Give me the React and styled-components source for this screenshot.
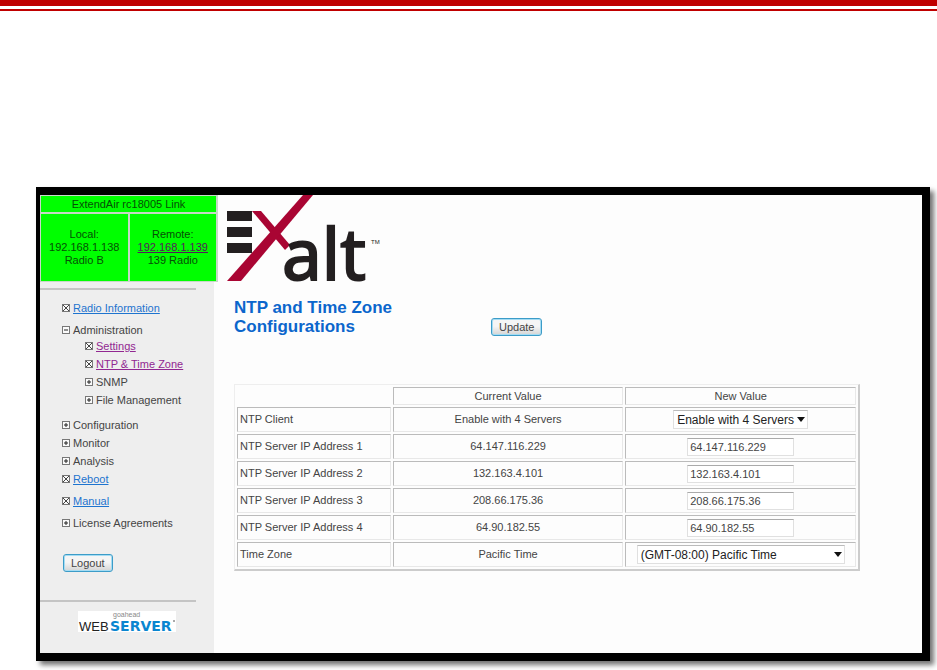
import { useState } from "react";
import styled, { createGlobalStyle } from "styled-components";

const GlobalStyle = createGlobalStyle`
  * {
    box-sizing: border-box;
  }

  body {
    margin: 0;
    background-color: white;
    color: #444;
    font-family: "Liberation Sans", Arial, sans-serif;
    font-size: 11px;
    line-height: 13px;
  }
`;

const Page = styled.div``;

const TopBar = styled.div`
  height: 11px;
  border-top: 6px solid #c00000;
  border-bottom: 2px solid #c00000;
`;

const Frame = styled.div`
  display: flex;
  margin: 176px 7px 9px 36px;
  border: 8px solid black;
  border-left-width: 4px;
  box-shadow: 4px 4px 5px rgba(0, 0, 0, 0.55);
  background-color: #fdfdfd;
`;

const Sidebar = styled.aside`
  flex: 0 0 174px;
  min-width: 0;
  padding-bottom: 20px;
  background-color: #eee;
`;

const Status = styled.section`
  display: grid;
  grid-template-columns: 1fr 1fr;
  gap: 2px;
  width: 178px;
  margin-bottom: 6px;
  padding: 1px 2px 1px 1px;
  background-color: #c8d8c8;
  color: #064f06;
  text-align: center;
`;

const StatusTitle = styled.div`
  grid-column: 1 / 3;
  padding: 2px 0 1px;
  background-color: #00ff00;
`;

const StatusCell = styled.div`
  padding: 14px 0;
  background-color: #00ff00;
`;

const RemoteLink = styled.a`
  color: #551a5b;
`;

const Rule = styled.hr`
  width: 156px;
  height: 2px;
  margin: 0;
  border: none;
  background-color: #c4c4c4;
`;

const Nav = styled.nav`
  padding: 9px 0 0 22px;
`;

const MenuItem = styled.div`
  display: flex;
  align-items: center;
  gap: 3px;
  height: 18px;
  margin-top: ${(props) => (props.$spaced ? "4px" : "0")};
`;

const SubMenu = styled.div`
  margin-top: -2px;
  padding: 0 0 7px 23px;
`;

const MenuLink = styled.a`
  color: ${(props) => (props.$visited ? "#912791" : "#1e74cf")};
`;

const Box = styled.svg`
  width: 8px;
  height: 8px;
  flex: none;
`;

const Button = styled.button`
  height: 18px;
  padding: 0 7px;
  border: 1px solid #3c9cc8;
  border-radius: 3px;
  box-shadow: inset 0 0 0 1px #a5dcf3;
  background: linear-gradient(#f5f5f5 45%, #d4d4d4);
  color: #444;
  font-family: inherit;
  font-size: 11px;
  line-height: 14px;
`;

const LogoutRow = styled.div`
  padding: 22px 0 28px 23px;
`;

const ServerLogo = styled.svg`
  display: block;
  width: 98px;
  height: 21px;
  margin: 9px 0 0 38px;
  overflow: visible;
`;

const Main = styled.main`
  flex: 1;
  min-width: 0;
`;

const ExaltLogo = styled.svg`
  display: block;
  width: 180px;
  height: 95px;
  margin-left: 6px;
  overflow: visible;
`;

const Content = styled.div`
  padding: 8px 62px 82px 20px;
`;

const TitleRow = styled.div`
  display: flex;
  align-items: flex-end;
  margin-bottom: 48px;
`;

const Title = styled.h1`
  flex: 0 0 257px;
  margin: 0;
  padding-right: 80px;
  color: #0b66cc;
  font-size: 17px;
  font-weight: 700;
  line-height: 19px;
`;

const Table = styled.table`
  width: 100%;
  border: 1px solid #eee;
  border-right: 2px solid #ccc;
  border-bottom: 2px solid #ccc;
  border-spacing: 2px;
  table-layout: fixed;
`;

const Head = styled.th`
  height: 18px;
  padding: 0;
  border: 1px solid #e8e8e8;
  border-top-color: #bbb;
  border-left-color: #bbb;
  font-weight: 400;
`;

const EmptyHead = styled.td`
  width: 25%;
  padding: 0;
`;

const Label = styled.th`
  height: 25px;
  padding: 0 2px;
  border: 1px solid #e8e8e8;
  border-top-color: #bbb;
  border-left-color: #bbb;
  font-weight: 400;
  text-align: left;
`;

const Cell = styled.td`
  height: 25px;
  padding: 0;
  border: 1px solid #e8e8e8;
  border-top-color: #bbb;
  border-left-color: #bbb;
  text-align: center;
`;

const Input = styled.input`
  display: block;
  width: 107px;
  height: 18px;
  margin: 0 auto;
  padding: 0 2px;
  border: 1px solid #e0e0e0;
  border-top-color: #aaa;
  background-color: white;
  color: #444;
  font-family: inherit;
  font-size: 11px;
`;

const SelectWrap = styled.div`
  position: relative;
  width: ${(props) => props.$width};
  margin: 0 auto;
`;

const Select = styled.select`
  display: block;
  width: 100%;
  height: 19px;
  padding: 0 3px;
  border: 1px solid #e0e0e0;
  border-top-color: #bbb;
  appearance: none;
  background-color: white;
  color: #222;
  font-family: inherit;
  font-size: 12px;
`;

const Arrow = styled.svg`
  position: absolute;
  top: 7px;
  right: 3px;
  width: 8px;
  height: 5px;
  pointer-events: none;
`;

const MENU_TOP = [{ text: "Radio Information", type: "link" }];

const MENU_ADMIN = [
  { text: "Settings", type: "link", visited: true },
  { text: "NTP & Time Zone", type: "link", visited: true },
  { text: "SNMP", type: "plus" },
  { text: "File Management", type: "plus" },
];

const MENU_BOTTOM = [
  { text: "Configuration", type: "plus" },
  { text: "Monitor", type: "plus" },
  { text: "Analysis", type: "plus" },
  { text: "Reboot", type: "link" },
  { text: "Manual", type: "link", spaced: true },
  { text: "License Agreements", type: "plus", spaced: true },
];

const SERVERS = ["64.147.116.229", "132.163.4.101", "208.66.175.36", "64.90.182.55"];

const MenuBox = ({ type }) => (
  <Box viewBox="0 0 8 8" aria-hidden="true">
    <rect x="0.5" y="0.5" width="7" height="7" fill="#fafafa" stroke="#777" />
    {type === "link" && <path d="M1 1L7 7M7 1L1 7" stroke="#444" />}
    {type !== "link" && <path d="M2 4H6" stroke="#222" />}
    {type === "plus" && <path d="M4 2V6" stroke="#222" />}
  </Box>
);

const Item = ({ item }) => (
  <MenuItem $spaced={item.spaced}>
    <MenuBox type={item.type} />
    {item.type === "link" ? (
      <MenuLink href="#" $visited={item.visited}>
        {item.text}
      </MenuLink>
    ) : (
      <span>{item.text}</span>
    )}
  </MenuItem>
);

const DropDown = ({ id, value, width }) => (
  <SelectWrap $width={width}>
    <Select id={id} defaultValue={value}>
      <option>{value}</option>
    </Select>
    <Arrow viewBox="0 0 8 5" aria-hidden="true">
      <path d="M0 0H8L4 5Z" fill="#111" />
    </Arrow>
  </SelectWrap>
);

const App = () => {
  const [servers, setServers] = useState(SERVERS);

  const changeServer = (index, value) => {
    setServers(servers.map((server, i) => (i === index ? value : server)));
  };

  return (
    <Page>
      <GlobalStyle />
      <TopBar />
      <Frame>
        <Sidebar>
          <Status>
            <StatusTitle>ExtendAir rc18005 Link</StatusTitle>
            <StatusCell>
              Local:
              <br />
              192.168.1.138
              <br />
              Radio B
            </StatusCell>
            <StatusCell>
              Remote:
              <br />
              <RemoteLink href="#">192.168.1.139</RemoteLink>
              <br />
              139 Radio
            </StatusCell>
          </Status>
          <Rule />
          <Nav>
            {MENU_TOP.map((item) => (
              <Item key={item.text} item={item} />
            ))}
            <Item item={{ text: "Administration", type: "minus", spaced: true }} />
            <SubMenu>
              {MENU_ADMIN.map((item) => (
                <Item key={item.text} item={item} />
              ))}
            </SubMenu>
            {MENU_BOTTOM.map((item) => (
              <Item key={item.text} item={item} />
            ))}
          </Nav>
          <LogoutRow>
            <Button type="button">Logout</Button>
          </LogoutRow>
          <Rule />
          <ServerLogo viewBox="0 0 98 21" role="img" aria-label="goahead WebServer">
            <rect width="98" height="21" fill="#fff" />
            <text x="35" y="6" fontSize="7" fill="#888">goahead</text>
            <text x="1" y="20" fontSize="13" fill="#222">WEB</text>
            <text x="32" y="20" fontFamily="DejaVu Sans, sans-serif" fontSize="14" fontWeight="700" fill="#0a86d0">
              SERVER
            </text>
            <path d="M95 10H97" stroke="#555" />
          </ServerLogo>
        </Sidebar>
        <Main>
          <ExaltLogo viewBox="0 0 180 95" role="img" aria-label="Exalt">
            <path d="M7 16H32V26H7ZM7 32H32V42H7ZM7 48H32V58H7Z" fill="#231f20" />
            <path d="M32 16H41L70 50L65 55Z" fill="#a90533" />
            <path d="M83 0H93L21 86H7Z" fill="#a90533" />
            <text
              x="62"
              y="85"
              fontFamily="Noto Sans, sans-serif"
              fontSize="71"
              fill="#231f20"
              stroke="#231f20"
              strokeWidth="2"
            >
              alt
            </text>
            <text x="151" y="49" fontSize="6" fill="#231f20">TM</text>
          </ExaltLogo>
          <Content>
            <TitleRow>
              <Title>NTP and Time Zone Configurations</Title>
              <Button type="button">Update</Button>
            </TitleRow>
            <Table>
              <thead>
                <tr>
                  <EmptyHead />
                  <Head scope="col">Current Value</Head>
                  <Head scope="col">New Value</Head>
                </tr>
              </thead>
              <tbody>
                <tr>
                  <Label scope="row">
                    <label htmlFor="client">NTP Client</label>
                  </Label>
                  <Cell>Enable with 4 Servers</Cell>
                  <Cell>
                    <DropDown id="client" value="Enable with 4 Servers" width="135px" />
                  </Cell>
                </tr>
                {servers.map((server, index) => (
                  <tr key={index}>
                    <Label scope="row">
                      <label htmlFor={`server${index}`}>NTP Server IP Address {index + 1}</label>
                    </Label>
                    <Cell>{SERVERS[index]}</Cell>
                    <Cell>
                      <Input
                        id={`server${index}`}
                        value={server}
                        onChange={(e) => changeServer(index, e.target.value)}
                      />
                    </Cell>
                  </tr>
                ))}
                <tr>
                  <Label scope="row">
                    <label htmlFor="zone">Time Zone</label>
                  </Label>
                  <Cell>Pacific Time</Cell>
                  <Cell>
                    <DropDown id="zone" value="(GMT-08:00) Pacific Time" width="208px" />
                  </Cell>
                </tr>
              </tbody>
            </Table>
          </Content>
        </Main>
      </Frame>
    </Page>
  );
};

export default App;
